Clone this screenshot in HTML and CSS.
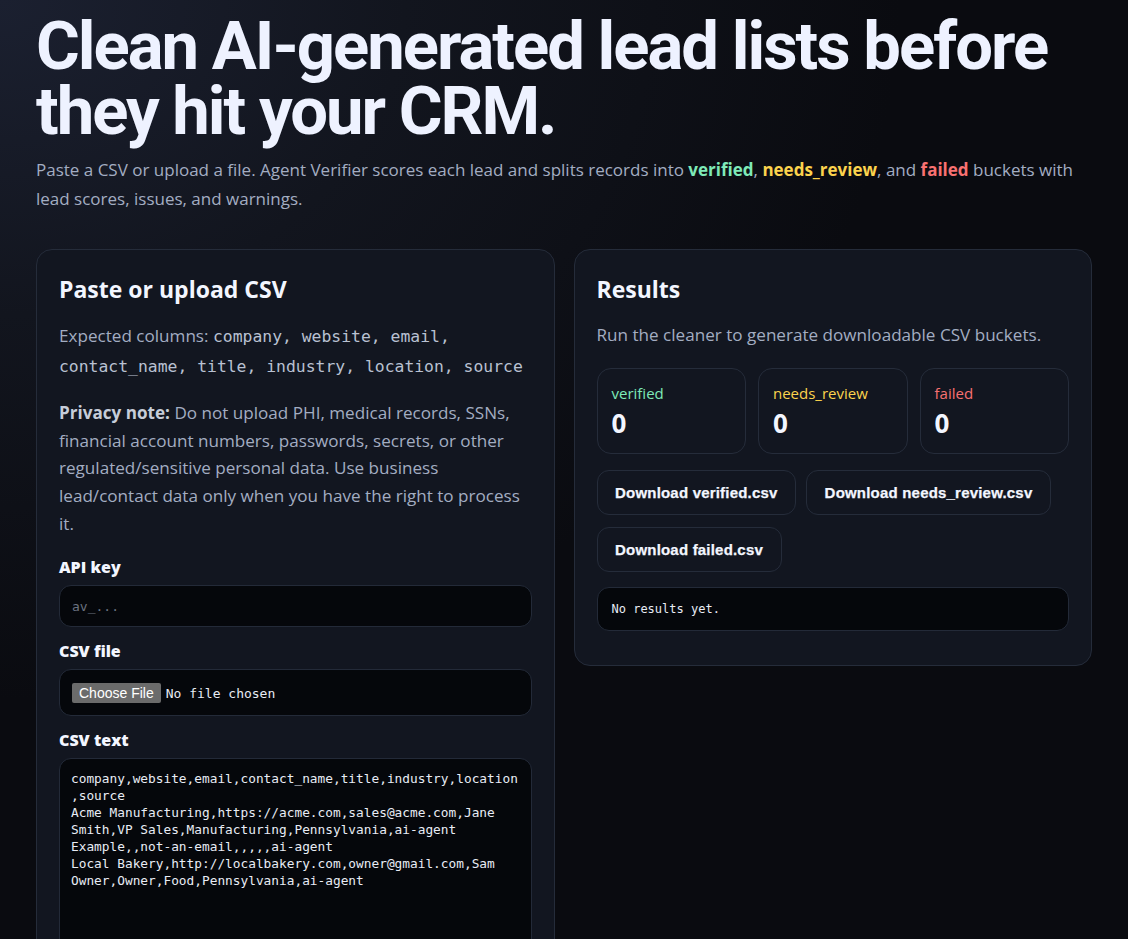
FILE: index.html
```html
<!DOCTYPE html>
<html lang="en">
<head>
<meta charset="utf-8">
<title>Agent Verifier — Lead list cleaner</title>
<link rel="stylesheet" href="styles.css">
</head>
<body>
<main class="wrap">
  <header class="hero">
    <h1 class="hero-title">Clean AI-generated lead lists before they hit your CRM.</h1>
    <p class="lede">Paste a CSV or upload a file. Agent Verifier scores each lead and splits records into <strong class="c-ok">verified</strong>, <strong class="c-warn">needs_review</strong>, and <strong class="c-bad">failed</strong> buckets with lead scores, issues, and warnings.</p>
  </header>

  <div class="grid">
    <section class="card">
      <h2 class="card-title">Paste or upload CSV</h2>
      <p class="muted cols">Expected columns: <code class="code">company, website, email, contact_name, title, industry, location, source</code></p>
      <p class="muted"><strong class="strong">Privacy note:</strong> Do not upload PHI, medical records, SSNs, financial account numbers, passwords, secrets, or other regulated/sensitive personal data. Use business lead/contact data only when you have the right to process it.</p>

      <div class="field first">
        <label class="label" for="apikey">API key</label>
        <input class="input" id="apikey" type="text" placeholder="av_...">
      </div>
      <div class="field">
        <label class="label" for="csvfile">CSV file</label>
        <div class="filebox"><input class="file" id="csvfile" type="file" accept=".csv"></div>
      </div>
      <div class="field">
        <label class="label" for="csvtext">CSV text</label>
        <textarea class="textarea" id="csvtext" spellcheck="false">company,website,email,contact_name,title,industry,location,source
Acme Manufacturing,https://acme.com,sales@acme.com,Jane Smith,VP Sales,Manufacturing,Pennsylvania,ai-agent
Example,,not-an-email,,,,,ai-agent
Local Bakery,http://localbakery.com,owner@gmail.com,Sam Owner,Owner,Food,Pennsylvania,ai-agent</textarea>
      </div>
    </section>

    <section class="card card-results">
      <h2 class="card-title">Results</h2>
      <p class="muted">Run the cleaner to generate downloadable CSV buckets.</p>
      <div class="stats">
        <div class="stat">
          <div class="stat-label c-ok">verified</div>
          <div class="stat-num">0</div>
        </div>
        <div class="stat">
          <div class="stat-label c-warn">needs_review</div>
          <div class="stat-num">0</div>
        </div>
        <div class="stat">
          <div class="stat-label c-bad">failed</div>
          <div class="stat-num">0</div>
        </div>
      </div>
      <div class="actions">
        <button class="btn" type="button">Download verified.csv</button>
        <button class="btn" type="button">Download needs_review.csv</button>
        <button class="btn" type="button">Download failed.csv</button>
      </div>
      <pre class="output">No results yet.</pre>
    </section>
  </div>
</main>
</body>
</html>
```

FILE: styles.css
```css
* { box-sizing: border-box; }

html { color-scheme: dark; }

body {
  margin: 0;
  min-height: 100vh;
  background-color: #0a0b10;
  background-image: radial-gradient(ellipse 900px 700px at 0 0, #1b2030 0%, #12151e 45%, #0a0b10 100%);
  color: #e8ecf5;
  font-family: "Open Sans", "Noto Sans", "DejaVu Sans", sans-serif;
}

.wrap {
  width: 1056px;
  margin: 0 auto;
  padding: 14px 0 0;
}

.hero-title {
  margin: 0;
  font-family: Roboto, "Open Sans", sans-serif;
  font-size: 67px;
  line-height: 65px;
  font-weight: 700;
  letter-spacing: -2px;
  color: #eef2ff;
}

.lede {
  margin: 11px 0 36px;
  font-size: 17px;
  line-height: 29px;
  color: #a3adc2;
}

.c-ok { color: #7eeab8; }
.c-warn { color: #fcd34d; }
.c-bad { color: #f87171; }

.grid {
  display: grid;
  grid-template-columns: 1fr 1fr;
  gap: 19px;
  align-items: start;
}

.card {
  background: #121620;
  border: 1px solid #252c3a;
  border-radius: 16px;
  padding: 24px 22px 22px;
}

.card-results { padding-bottom: 34px; }

.card-title {
  margin: 0 0 16.5px;
  font-size: 23px;
  line-height: 30px;
  font-weight: 700;
  color: #f3f6ff;
}

.muted {
  margin: 0 0 18.5px;
  font-size: 17.1px;
  line-height: 27.7px;
  color: #a3adc2;
}

.cols { line-height: 29px; }

.strong { color: #c6cdd9; font-weight: 700; }

.code {
  font-family: "DejaVu Sans Mono", monospace;
  font-size: 16.4px;
  color: #b9c1d2;
}

.field { margin-top: 14px; }
.field.first { margin-top: 19.5px; }

.label {
  display: block;
  margin: 0 0 8px;
  font-size: 16px;
  line-height: 20px;
  font-weight: 800;
  color: #f3f6ff;
}

.input,
.filebox,
.textarea {
  display: block;
  width: 100%;
  background: #05070b;
  border: 1px solid #232a38;
  border-radius: 12px;
  color: #e8ecf5;
}

.input {
  height: 42px;
  padding: 0 12px;
  font-family: "DejaVu Sans Mono", monospace;
  font-size: 13px;
}

.input::placeholder { color: #6b7280; }

.filebox {
  height: 47px;
  padding: 0 12px;
  display: flex;
  align-items: center;
}

.file {
  font-family: "DejaVu Sans Mono", monospace;
  font-size: 13px;
  color: #e8ecf5;
}

.file::file-selector-button {
  font-family: "Liberation Sans", Arial, sans-serif;
  font-size: 14px;
  background: #6b6b6b;
  color: #ffffff;
  border: none;
  border-radius: 2px;
  padding: 2px 7px;
  margin-right: 5px;
}

.textarea {
  height: 240px;
  padding: 11px 11px 12px;
  resize: vertical;
  font-family: "DejaVu Sans Mono", monospace;
  font-size: 12.8px;
  line-height: 17px;
}

.stats {
  display: grid;
  grid-template-columns: repeat(3, 1fr);
  gap: 12px;
  margin-top: 20px;
}

.stat {
  border: 1px solid #252c3a;
  border-radius: 14px;
  padding: 14px;
}

.stat-label {
  font-size: 15px;
  line-height: 20px;
}

.stat-num {
  margin-top: 4px;
  font-size: 26px;
  line-height: 32px;
  font-weight: 700;
  color: #f3f6ff;
}

.actions {
  display: flex;
  flex-wrap: wrap;
  gap: 12px 10px;
  margin-top: 16px;
}

.btn {
  height: 45px;
  padding: 0 17.5px;
  background: #121620;
  border: 1px solid #252c3a;
  border-radius: 12px;
  color: #f3f6ff;
  font-family: "Liberation Sans", Arial, sans-serif;
  font-size: 15px;
  font-weight: 700;
  letter-spacing: 0.2px;
  -webkit-text-stroke: 0.25px #f3f6ff;
  cursor: pointer;
}

.output {
  margin: 15px 0 0;
  padding: 14px;
  background: #05070b;
  border: 1px solid #232a38;
  border-radius: 12px;
  font-family: "DejaVu Sans Mono", monospace;
  font-size: 12px;
  line-height: 14px;
  color: #e8ecf5;
}
```
